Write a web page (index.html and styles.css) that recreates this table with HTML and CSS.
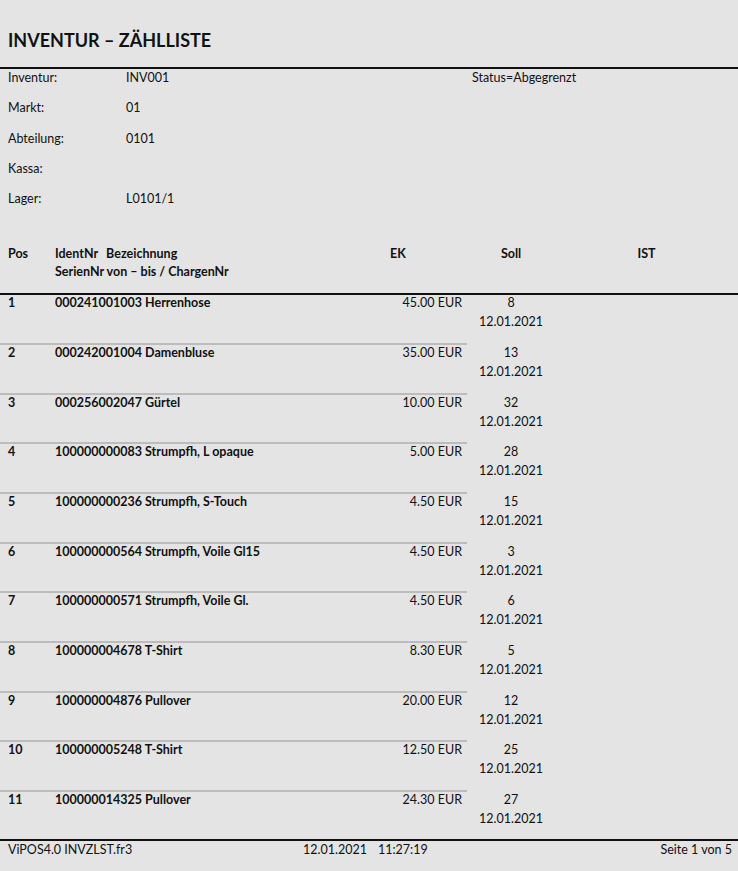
FILE: index.html
```html
<!DOCTYPE html>
<html lang="de">
<head>
<meta charset="utf-8">
<title>Inventur – Zählliste</title>
<link rel="stylesheet" href="styles.css">
</head>
<body>
<div class="page">
  <header class="title-band">
    <h1 class="title">INVENTUR – ZÄHLLISTE</h1>
  </header>

  <section class="info">
    <div class="info-row"><span class="lbl">Inventur:</span><span class="val">INV001</span><span class="status">Status=Abgegrenzt</span></div>
    <div class="info-row"><span class="lbl">Markt:</span><span class="val">01</span><span></span></div>
    <div class="info-row"><span class="lbl">Abteilung:</span><span class="val">0101</span><span></span></div>
    <div class="info-row"><span class="lbl">Kassa:</span><span class="val"></span><span></span></div>
    <div class="info-row"><span class="lbl">Lager:</span><span class="val">L0101/1</span><span></span></div>
  </section>

  <section class="table">
    <div class="thead">
      <div class="c-pos">Pos</div>
      <div class="c-ident"><span class="h-ident">IdentNr</span>Bezeichnung<br>SerienNr von – bis / ChargenNr</div>
      <div class="c-ek h-ek">EK</div>
      <div class="c-soll">Soll</div>
      <div class="c-ist">IST</div>
    </div>

    <div class="row first">
      <div class="c-pos b">1</div><div class="c-ident b">000241001003 Herrenhose</div><div class="c-ek">45.00 EUR</div><div class="c-soll">8<span class="date">12.01.2021</span></div><div class="c-ist"></div>
    </div>
    <div class="row">
      <div class="c-pos b">2</div><div class="c-ident b">000242001004 Damenbluse</div><div class="c-ek">35.00 EUR</div><div class="c-soll">13<span class="date">12.01.2021</span></div><div class="c-ist"></div>
    </div>
    <div class="row">
      <div class="c-pos b">3</div><div class="c-ident b">000256002047 Gürtel</div><div class="c-ek">10.00 EUR</div><div class="c-soll">32<span class="date">12.01.2021</span></div><div class="c-ist"></div>
    </div>
    <div class="row">
      <div class="c-pos b">4</div><div class="c-ident b">100000000083 Strumpfh, L opaque</div><div class="c-ek">5.00 EUR</div><div class="c-soll">28<span class="date">12.01.2021</span></div><div class="c-ist"></div>
    </div>
    <div class="row">
      <div class="c-pos b">5</div><div class="c-ident b">100000000236 Strumpfh, S-Touch</div><div class="c-ek">4.50 EUR</div><div class="c-soll">15<span class="date">12.01.2021</span></div><div class="c-ist"></div>
    </div>
    <div class="row">
      <div class="c-pos b">6</div><div class="c-ident b">100000000564 Strumpfh, Voile Gl15</div><div class="c-ek">4.50 EUR</div><div class="c-soll">3<span class="date">12.01.2021</span></div><div class="c-ist"></div>
    </div>
    <div class="row">
      <div class="c-pos b">7</div><div class="c-ident b">100000000571 Strumpfh, Voile Gl.</div><div class="c-ek">4.50 EUR</div><div class="c-soll">6<span class="date">12.01.2021</span></div><div class="c-ist"></div>
    </div>
    <div class="row">
      <div class="c-pos b">8</div><div class="c-ident b">100000004678 T-Shirt</div><div class="c-ek">8.30 EUR</div><div class="c-soll">5<span class="date">12.01.2021</span></div><div class="c-ist"></div>
    </div>
    <div class="row">
      <div class="c-pos b">9</div><div class="c-ident b">100000004876 Pullover</div><div class="c-ek">20.00 EUR</div><div class="c-soll">12<span class="date">12.01.2021</span></div><div class="c-ist"></div>
    </div>
    <div class="row">
      <div class="c-pos b">10</div><div class="c-ident b">100000005248 T-Shirt</div><div class="c-ek">12.50 EUR</div><div class="c-soll">25<span class="date">12.01.2021</span></div><div class="c-ist"></div>
    </div>
    <div class="row">
      <div class="c-pos b">11</div><div class="c-ident b">100000014325 Pullover</div><div class="c-ek">24.30 EUR</div><div class="c-soll">27<span class="date">12.01.2021</span></div><div class="c-ist"></div>
    </div>
  </section>

  <footer class="footer">
    <span class="f-left">ViPOS4.0 INVZLST.fr3</span>
    <span class="f-mid"><span class="f-date">12.01.2021</span>11:27:19</span>
    <span class="f-right">Seite 1 von 5</span>
  </footer>
</div>
</body>
</html>
```

FILE: styles.css
```css
html, body {
  margin: 0;
  padding: 0;
  background: #e4e4e4;
}

body {
  font-family: Lato, "Open Sans", "DejaVu Sans", sans-serif;
  font-size: 12.5px;
  color: #111;
}

.page {
  width: 738px;
  height: 871px;
  display: flex;
  flex-direction: column;
}

.title-band {
  height: 69px;
  border-bottom: 2px solid #111;
  box-sizing: border-box;
  display: flex;
  align-items: flex-end;
  padding: 0 0 17px 8px;
}

.title {
  margin: 0;
  font-size: 18px;
  font-weight: 700;
  line-height: 20px;
}

.info {
  display: flex;
  flex-direction: column;
  padding-top: 1px;
}

.info-row {
  display: grid;
  grid-template-columns: 118px 346px 1fr;
  padding-left: 8px;
  height: 30.25px;
  line-height: 16px;
}

.table {
  margin-top: 24px;
}

.thead,
.row {
  display: grid;
  grid-template-columns: 55px 333px 79px 88px 1fr;
}

.thead {
  font-weight: 700;
  line-height: 18px;
  padding-bottom: 12px;
}

.h-ident {
  margin-right: 8px;
}

.c-pos {
  padding-left: 8px;
}

.c-ek {
  text-align: right;
  padding-right: 5px;
}

.h-ek {
  text-align: left;
  padding-left: 2px;
}

.c-soll,
.c-ist {
  text-align: center;
}

.row {
  height: 49.67px;
  box-sizing: border-box;
  line-height: 16px;
}

.row > div {
  border-top: 2px solid transparent;
}

.row > .c-pos,
.row > .c-ident,
.row > .c-ek {
  border-top-color: #bcbcbc;
}

.row.first > div {
  border-top-color: #111;
}

.date {
  display: block;
  margin-top: 3px;
}

.b {
  font-weight: 700;
}

.footer {
  border-top: 2px solid #111;
  display: grid;
  grid-template-columns: 295px 1fr auto;
  padding: 1px 6px 0 8px;
  line-height: 16px;
}

.f-date {
  margin-right: 11px;
}
```
